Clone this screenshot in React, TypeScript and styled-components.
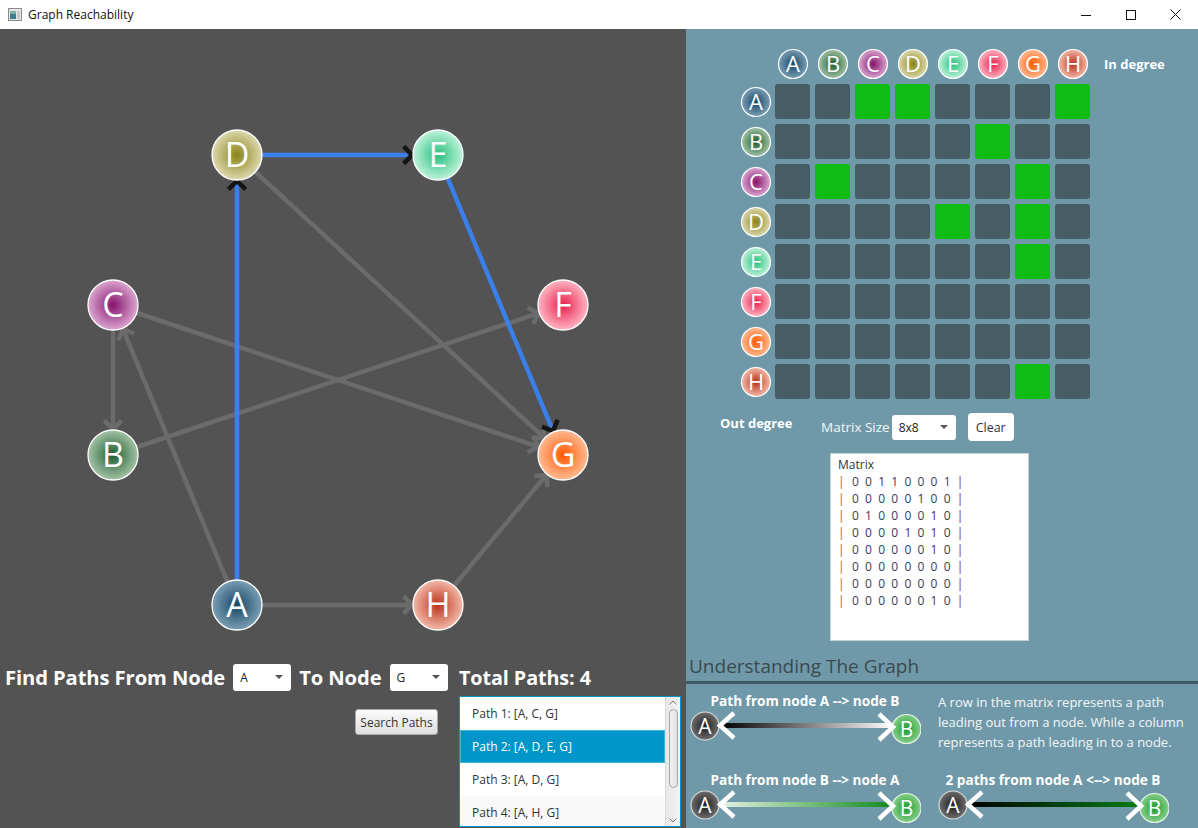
import React from 'react';
import styled, { createGlobalStyle } from 'styled-components';

const GlobalStyle = createGlobalStyle`
  html, body { margin: 0; padding: 0; }
  body {
    width: 1198px; height: 828px; overflow: hidden;
    font-family: "Open Sans", "Noto Sans", sans-serif;
  }
`;

type NodeId = 'A' | 'B' | 'C' | 'D' | 'E' | 'F' | 'G' | 'H';
const IDS: NodeId[] = ['A', 'B', 'C', 'D', 'E', 'F', 'G', 'H'];

const NODE_COLORS: Record<NodeId, [string, string]> = {
  A: ['#164564', '#7a9fb4'],
  B: ['#1d5c2f', '#a3c3a5'],
  C: ['#85136f', '#dba6cf'],
  D: ['#8a8318', '#dcd9ae'],
  E: ['#27c07e', '#bdf2d9'],
  F: ['#e61f4b', '#ffb4c2'],
  G: ['#ff5800', '#ffbc94'],
  H: ['#b8331a', '#f4b9a9'],
};

const POS: Record<NodeId, [number, number]> = {
  D: [237, 126],
  E: [438, 126],
  C: [113, 276],
  F: [563, 276],
  B: [113, 426],
  G: [563, 426],
  A: [237, 576],
  H: [438, 576],
};

const MATRIX: number[][] = [
  [0, 0, 1, 1, 0, 0, 0, 1],
  [0, 0, 0, 0, 0, 1, 0, 0],
  [0, 1, 0, 0, 0, 0, 1, 0],
  [0, 0, 0, 0, 1, 0, 1, 0],
  [0, 0, 0, 0, 0, 0, 1, 0],
  [0, 0, 0, 0, 0, 0, 0, 0],
  [0, 0, 0, 0, 0, 0, 0, 0],
  [0, 0, 0, 0, 0, 0, 1, 0],
];

const HIGHLIGHT: string[] = ['A-D', 'D-E', 'E-G'];

/* ---------- layout ---------- */

const Window = styled.div`
  width: 1198px;
  height: 828px;
  display: flex;
  flex-direction: column;
`;

const TitleBar = styled.div`
  height: 29px;
  flex: none;
  background: #ffffff;
  display: flex;
  align-items: center;
  padding-left: 8px;
  box-sizing: border-box;
`;

const TitleText = styled.span`
  font-family: "Open Sans", "Noto Sans", sans-serif;
  font-size: 12px;
  color: #111;
  margin-left: 6px;
  flex: 1;
`;

const WinControls = styled.div`
  display: flex;
  height: 29px;
`;

const WinButton = styled.div`
  width: 45px;
  height: 29px;
  display: flex;
  align-items: center;
  justify-content: center;
`;

const Body = styled.div`
  flex: 1;
  display: flex;
  min-height: 0;
`;

const LeftPanel = styled.div`
  width: 686px;
  background: #535353;
  display: flex;
  flex-direction: column;
`;

const GraphSvg = styled.svg`
  display: block;
  flex: none;
  width: 686px;
  height: 632px;
`;

const Controls = styled.div`
  display: flex;
  padding-left: 5px;
  flex: 1;
`;

const ControlsLeft = styled.div`
  width: 441px;
  display: flex;
  flex-direction: column;
`;

const FindRow = styled.div`
  height: 32px;
  display: flex;
  align-items: center;
  gap: 8px;
`;

const BigLabel = styled.span`
  font-family: "Open Sans", "Noto Sans", sans-serif;
  font-weight: 700;
  font-size: 20.2px;
  color: #ffffff;
  letter-spacing: -0.1px;
  white-space: nowrap;
`;

const Combo = styled.div<{ $w: number; $h: number }>`
  width: ${(p) => p.$w}px;
  height: ${(p) => p.$h}px;
  flex: none;
  background: #ffffff;
  border-radius: 3px;
  display: flex;
  align-items: center;
  justify-content: space-between;
  padding: 0 8px 0 7px;
  box-sizing: border-box;
  font-size: 12px;
  color: #222;
`;

const ComboArrow = styled.span`
  width: 0;
  height: 0;
  border-left: 4px solid transparent;
  border-right: 4px solid transparent;
  border-top: 4px solid #555;
`;

const ButtonRow = styled.div`
  display: flex;
  justify-content: flex-end;
  padding-right: 8px;
  margin-top: 16px;
`;

const SearchButton = styled.div`
  width: 83px;
  height: 26px;
  box-sizing: border-box;
  border: 1px solid #a9a9a9;
  border-radius: 3px;
  background: linear-gradient(#fbfbfb, #dedede);
  font-size: 12px;
  color: #333;
  display: flex;
  align-items: center;
  justify-content: center;
`;

const ControlsRight = styled.div`
  margin-left: 13px;
  width: 222px;
  display: flex;
  flex-direction: column;
`;

const TotalLabel = styled(BigLabel)`
  height: 32px;
  display: flex;
  align-items: center;
  font-size: 19.8px;
`;

const ListBox = styled.div`
  margin-top: 3px;
  height: 131px;
  border: 1px solid #0096c9;
  background: #ffffff;
  box-sizing: border-box;
  display: flex;
`;

const ListItems = styled.div`
  flex: 1;
  display: flex;
  flex-direction: column;
  overflow: hidden;
`;

const ListItem = styled.div<{ $selected?: boolean; $alt?: boolean }>`
  height: 33px;
  flex: none;
  display: flex;
  align-items: center;
  padding-left: 12px;
  font-size: 12px;
  color: ${(p) => (p.$selected ? '#ffffff' : '#333333')};
  background: ${(p) => (p.$selected ? '#0096c9' : p.$alt ? '#f9f9f9' : '#ffffff')};
  box-shadow: ${(p) => (p.$selected ? 'inset 0 0 0 1px #3fb4de' : 'none')};
`;

const ScrollBar = styled.div`
  width: 15px;
  background: linear-gradient(90deg, #e8e8e8, #f4f4f4);
  border-left: 1px solid #dcdcdc;
  display: flex;
  flex-direction: column;
  align-items: center;
  justify-content: space-between;
  padding: 3px 0;
  box-sizing: border-box;
`;

const ScrollThumb = styled.div`
  width: 9px;
  flex: 1;
  margin: 4px 0 30px;
  border: 1px solid #a6a6a6;
  border-radius: 5px;
  background: linear-gradient(90deg, #f2f2f2, #e0e0e0);
  box-sizing: border-box;
`;

const RightPanel = styled.div`
  flex: 1;
  background: #6f99a8;
  display: flex;
  flex-direction: column;
  & > * { flex-shrink: 0; }
`;

const MatrixGrid = styled.div`
  margin-top: 20px;
  margin-left: 56px;
  display: grid;
  grid-template-columns: 28px repeat(8, 35px) auto;
  grid-auto-rows: 35px;
  grid-template-rows: 30px;
  column-gap: 5px;
  row-gap: 5px;
  align-items: center;
`;

const HeaderCell = styled.div`
  display: flex;
  align-items: center;
  justify-content: center;
`;

const MatrixCell = styled.div<{ $on: boolean }>`
  width: 35px;
  height: 35px;
  border-radius: 3px;
  background: ${(p) => (p.$on ? '#0fbc13' : '#465d66')};
`;

const DegreeLabel = styled.span`
  font-weight: 700;
  font-size: 13px;
  color: #ffffff;
  white-space: nowrap;
`;

const InDegree = styled(DegreeLabel)`
  padding-left: 9px;
  align-self: center;
`;

const OptionsRow = styled.div`
  margin-top: 14px;
  height: 28px;
  display: flex;
  align-items: center;
`;

const OutDegree = styled(DegreeLabel)`
  margin-left: 34px;
  width: 101px;
  margin-top: -8px;
`;

const SizeLabel = styled.span`
  font-size: 13.5px;
  color: #f4f7f8;
  margin-right: 2px;
  font-weight: 400;
`;

const ClearButton = styled.div`
  margin-left: 12px;
  width: 46px;
  height: 28px;
  background: #ffffff;
  border-radius: 4px;
  display: flex;
  align-items: center;
  justify-content: center;
  font-size: 12.5px;
  color: #333;
`;

const MatrixText = styled.div`
  margin-top: 12px;
  margin-left: 144px;
  width: 199px;
  height: 188px;
  box-sizing: border-box;
  background: #ffffff;
  border: 1px solid #c8d3d6;
  padding: 2px 0 0 7px;
  font-size: 12px;
  line-height: 17px;
  color: #333;
`;

const MatrixLine = styled.div`
  display: flex;
  white-space: pre;
`;

const Pipe = styled.span<{ $c: string }>`
  color: ${(p) => p.$c};
  width: 14px;
`;

const Digit = styled.span`
  width: 13.1px;
  color: #3c3a55;
`;

const SectionTitle = styled.div`
  margin-top: 13px;
  padding-left: 3px;
  font-size: 19px;
  line-height: 24px;
  color: #3a4a50;
  font-weight: 400;
`;

const SectionRule = styled.div`
  margin-top: 3px;
  height: 3px;
  background: #3f5a65;
`;

const LegendGrid = styled.div`
  padding: 8px 0 0 3px;
  display: grid;
  grid-template-columns: 232px 1fr;
  column-gap: 16px;
  row-gap: 19px;
`;

const LegendItem = styled.div`
  width: 232px;
  display: flex;
  flex-direction: column;
  align-items: center;
`;

const LegendLabel = styled.span`
  font-weight: 700;
  font-size: 13.6px;
  line-height: 18px;
  color: #ffffff;
  white-space: nowrap;
`;

const LegendDesc = styled.p`
  margin: 0;
  padding-left: 1px;
  font-size: 13px;
  line-height: 20px;
  color: #f4f7f8;
  width: 260px;
`;

/* ---------- drawing helpers ---------- */

function Gradients() {
  return (
    <defs>
      {IDS.map((id) => (
        <radialGradient key={id} id={`g${id}`} cx="50%" cy="50%" r="50%">
          <stop offset="0%" stopColor={NODE_COLORS[id][0]} />
          <stop offset="100%" stopColor={NODE_COLORS[id][1]} />
        </radialGradient>
      ))}
    </defs>
  );
}

function NodeCircle({ id, cx, cy, r, fs }: { id: NodeId; cx: number; cy: number; r: number; fs: number }) {
  return (
    <g>
      <circle cx={cx} cy={cy} r={r} fill={`url(#g${id})`} stroke="#ffffff" strokeWidth={1.3} />
      <text
        x={cx}
        y={cy + fs * 0.36}
        textAnchor="middle"
        fontSize={fs}
        fill="#ffffff"
        fontFamily='"Open Sans", "Noto Sans", sans-serif'
      >
        {id}
      </text>
    </g>
  );
}

function Chevron({ tx, ty, ux, uy, color, len, width, spread }: {
  tx: number; ty: number; ux: number; uy: number; color: string; len: number; width: number; spread: number;
}) {
  const a = spread;
  const rot = (x: number, y: number, t: number) => [x * Math.cos(t) - y * Math.sin(t), x * Math.sin(t) + y * Math.cos(t)];
  const [ax, ay] = rot(-ux, -uy, a);
  const [bx, by] = rot(-ux, -uy, -a);
  return (
    <polyline
      points={`${tx + ax * len},${ty + ay * len} ${tx},${ty} ${tx + bx * len},${ty + by * len}`}
      fill="none"
      stroke={color}
      strokeWidth={width}
      strokeLinecap="butt"
      strokeLinejoin="miter"
    />
  );
}

function Edge({ from, to, hl }: { from: NodeId; to: NodeId; hl: boolean }) {
  const [x1, y1] = POS[from];
  const [x2, y2] = POS[to];
  const dx = x2 - x1;
  const dy = y2 - y1;
  const d = Math.hypot(dx, dy);
  const ux = dx / d;
  const uy = dy / d;
  const tx = x2 - ux * 26;
  const ty = y2 - uy * 26;
  const lineColor = hl ? '#3a7fea' : '#6b6b6b';
  const headColor = hl ? '#151515' : '#6b6b6b';
  return (
    <g>
      <line x1={x1} y1={y1} x2={tx - ux * 2} y2={ty - uy * 2} stroke={lineColor} strokeWidth={4.5} />
      <Chevron tx={tx} ty={ty} ux={ux} uy={uy} color={headColor} len={12} width={4.5} spread={0.8} />
    </g>
  );
}

function Graph() {
  const edges: [NodeId, NodeId][] = [];
  MATRIX.forEach((row, i) =>
    row.forEach((v, j) => {
      if (v) edges.push([IDS[i], IDS[j]]);
    })
  );
  const sorted = [...edges].sort((a, b) => {
    const ha = HIGHLIGHT.includes(`${a[0]}-${a[1]}`) ? 1 : 0;
    const hb = HIGHLIGHT.includes(`${b[0]}-${b[1]}`) ? 1 : 0;
    return ha - hb;
  });
  return (
    <GraphSvg viewBox="0 0 686 632">
      <Gradients />
      {sorted.map(([f, t]) => (
        <Edge key={`${f}${t}`} from={f} to={t} hl={HIGHLIGHT.includes(`${f}-${t}`)} />
      ))}
      {IDS.map((id) => (
        <NodeCircle key={id} id={id} cx={POS[id][0]} cy={POS[id][1]} r={25} fs={34} />
      ))}
    </GraphSvg>
  );
}

function SmallNode({ id }: { id: NodeId }) {
  return (
    <svg width={32} height={32} viewBox="0 0 32 32" style={{ overflow: 'visible' }}>
      <defs>
        <radialGradient id={`s${id}`} cx="50%" cy="50%" r="50%">
          <stop offset="0%" stopColor={NODE_COLORS[id][0]} />
          <stop offset="100%" stopColor={NODE_COLORS[id][1]} />
        </radialGradient>
      </defs>
      <circle cx={16} cy={16} r={14.5} fill={`url(#s${id})`} stroke="#ffffff" strokeWidth={1.2} />
      <text x={16} y={24} textAnchor="middle" fontSize={22} fill="#ffffff" fontFamily='"Open Sans", "Noto Sans", sans-serif'>
        {id}
      </text>
    </svg>
  );
}

function LegendDiagram({ gid, from, to }: { gid: string; from: string; to: string }) {
  return (
    <svg width={232} height={36} viewBox="0 0 232 36">
      <defs>
        <linearGradient id={gid} x1="0" x2="1" y1="0" y2="0">
          <stop offset="0%" stopColor={from} />
          <stop offset="100%" stopColor={to} />
        </linearGradient>
        <radialGradient id={`${gid}a`} cx="50%" cy="50%" r="50%">
          <stop offset="0%" stopColor="#1c1c1c" />
          <stop offset="100%" stopColor="#6e6e6e" />
        </radialGradient>
        <radialGradient id={`${gid}b`} cx="50%" cy="50%" r="50%">
          <stop offset="0%" stopColor="#1f9a2c" />
          <stop offset="100%" stopColor="#86cf8a" />
        </radialGradient>
      </defs>
      <rect x={32} y={13} width={172} height={5} fill={`url(#${gid})`} />
      <circle cx={16} cy={16} r={14} fill={`url(#${gid}a)`} stroke="#d9d9d9" strokeWidth={1.2} />
      <text x={16} y={23.5} textAnchor="middle" fontSize={21} fill="#ffffff" fontFamily='"Open Sans", "Noto Sans", sans-serif'>A</text>
      <circle cx={217.5} cy={19} r={14.5} fill={`url(#${gid}b)`} stroke="#e6f2e6" strokeWidth={1.2} />
      <text x={217.5} y={26.5} textAnchor="middle" fontSize={21} fill="#ffffff" fontFamily='"Open Sans", "Noto Sans", sans-serif'>B</text>
      <polyline points="45,3 31,15.5 45,28" fill="none" stroke="#ffffff" strokeWidth={4.5} />
      <polyline points="190,4 204,17 190,30" fill="none" stroke="#ffffff" strokeWidth={4.5} />
    </svg>
  );
}

function AppIcon() {
  return (
    <svg width={14} height={13} viewBox="0 0 14 13">
      <rect x={0.5} y={0.5} width={13} height={12} fill="#e8e8e8" stroke="#8a8a8a" />
      <rect x={2} y={3} width={6} height={8} fill="#3f7d8c" />
      <rect x={2} y={3} width={6} height={3} fill="#7fb3a0" />
      <rect x={9} y={3} width={3} height={8} fill="#c8c8c8" />
    </svg>
  );
}

export default function App() {
  const pipeStart = '#b5651d';
  const pipeEnd = '#7a1f7a';
  return (
    <>
      <GlobalStyle />
      <Window>
        <TitleBar>
          <AppIcon />
          <TitleText>Graph Reachability</TitleText>
          <WinControls>
            <WinButton>
              <svg width={10} height={10} viewBox="0 0 10 10"><line x1={0} y1={5.5} x2={10} y2={5.5} stroke="#111" strokeWidth={1} /></svg>
            </WinButton>
            <WinButton>
              <svg width={10} height={10} viewBox="0 0 10 10"><rect x={0.5} y={0.5} width={9} height={9} fill="none" stroke="#111" strokeWidth={1} /></svg>
            </WinButton>
            <WinButton>
              <svg width={11} height={11} viewBox="0 0 11 11"><path d="M0.5 0.5 L10.5 10.5 M10.5 0.5 L0.5 10.5" stroke="#111" strokeWidth={1} /></svg>
            </WinButton>
          </WinControls>
        </TitleBar>
        <Body>
          <LeftPanel>
            <Graph />
            <Controls>
              <ControlsLeft>
                <FindRow>
                  <BigLabel>Find Paths From Node</BigLabel>
                  <Combo $w={58} $h={27}>A<ComboArrow /></Combo>
                  <BigLabel>To Node</BigLabel>
                  <Combo $w={58} $h={27}>G<ComboArrow /></Combo>
                </FindRow>
                <ButtonRow>
                  <SearchButton>Search Paths</SearchButton>
                </ButtonRow>
              </ControlsLeft>
              <ControlsRight>
                <TotalLabel>Total Paths: 4</TotalLabel>
                <ListBox>
                  <ListItems>
                    <ListItem>Path 1: [A, C, G]</ListItem>
                    <ListItem $selected>Path 2: [A, D, E, G]</ListItem>
                    <ListItem>Path 3: [A, D, G]</ListItem>
                    <ListItem $alt>Path 4: [A, H, G]</ListItem>
                  </ListItems>
                  <ScrollBar>
                    <svg width={8} height={5} viewBox="0 0 8 5"><polyline points="0.5,4.5 4,1 7.5,4.5" fill="none" stroke="#777" /></svg>
                    <ScrollThumb />
                    <svg width={8} height={5} viewBox="0 0 8 5"><polyline points="0.5,0.5 4,4 7.5,0.5" fill="none" stroke="#777" /></svg>
                  </ScrollBar>
                </ListBox>
              </ControlsRight>
            </Controls>
          </LeftPanel>
          <RightPanel>
            <MatrixGrid>
              <div />
              {IDS.map((id) => (
                <HeaderCell key={id}><SmallNode id={id} /></HeaderCell>
              ))}
              <InDegree>In degree</InDegree>
              {MATRIX.map((row, i) => (
                <React.Fragment key={i}>
                  <HeaderCell><SmallNode id={IDS[i]} /></HeaderCell>
                  {row.map((v, j) => (
                    <MatrixCell key={j} $on={v === 1} />
                  ))}
                  <div />
                </React.Fragment>
              ))}
            </MatrixGrid>
            <OptionsRow>
              <OutDegree>Out degree</OutDegree>
              <SizeLabel>Matrix Size</SizeLabel>
              <Combo $w={64} $h={25}>8x8<ComboArrow /></Combo>
              <ClearButton>Clear</ClearButton>
            </OptionsRow>
            <MatrixText>
              <div>Matrix</div>
              {MATRIX.map((row, i) => (
                <MatrixLine key={i}>
                  <Pipe $c={pipeStart}>|</Pipe>
                  {row.map((v, j) => (
                    <Digit key={j}>{v}</Digit>
                  ))}
                  <Pipe $c={pipeEnd}>|</Pipe>
                </MatrixLine>
              ))}
            </MatrixText>
            <SectionTitle>Understanding The Graph</SectionTitle>
            <SectionRule />
            <LegendGrid>
              <LegendItem>
                <LegendLabel>Path from node A --&gt; node B</LegendLabel>
                <LegendDiagram gid="l1" from="#000000" to="#ffffff" />
              </LegendItem>
              <LegendDesc>
                A row in the matrix represents a path leading out from a node. While a column represents a path leading in to a node.
              </LegendDesc>
              <LegendItem>
                <LegendLabel>Path from node B --&gt; node A</LegendLabel>
                <LegendDiagram gid="l2" from="#e2f2e2" to="#0f8a1a" />
              </LegendItem>
              <LegendItem>
                <LegendLabel>2 paths from node A &lt;--&gt; node B</LegendLabel>
                <LegendDiagram gid="l3" from="#000000" to="#0a7d12" />
              </LegendItem>
            </LegendGrid>
          </RightPanel>
        </Body>
      </Window>
    </>
  );
}
